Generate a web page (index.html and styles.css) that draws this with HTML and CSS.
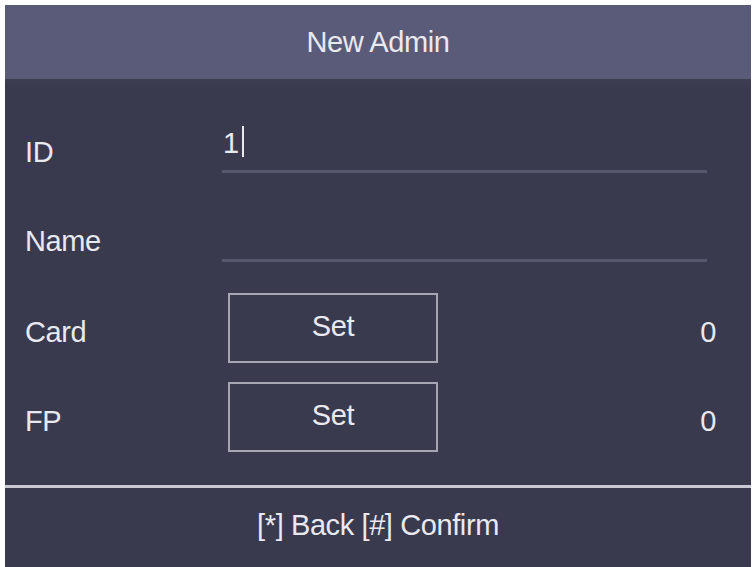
FILE: index.html
```html
<!DOCTYPE html>
<html>
<head>
<meta charset="utf-8">
<link rel="stylesheet" href="styles.css">
</head>
<body>
<div class="screen">
  <header class="title-bar">New Admin</header>
  <main class="form">
    <div class="row text-row first">
      <span class="label">ID</span>
      <div class="field"><span class="value">1</span><span class="caret"></span></div>
    </div>
    <div class="row text-row">
      <span class="label">Name</span>
      <div class="field"></div>
    </div>
    <div class="row btn-row card-row">
      <span class="label">Card</span>
      <div class="set-btn">Set</div>
      <span class="count">0</span>
    </div>
    <div class="row btn-row fp-row">
      <span class="label">FP</span>
      <div class="set-btn">Set</div>
      <span class="count">0</span>
    </div>
  </main>
  <div class="separator"></div>
  <footer class="hint-bar">[*] Back [#] Confirm</footer>
</div>
</body>
</html>
```

FILE: styles.css
```css
html, body {
  margin: 0;
  padding: 0;
  background: #ffffff;
}
body {
  width: 754px;
  height: 567px;
  overflow: hidden;
  font-family: "Liberation Sans", Arial, sans-serif;
  font-size: 29px;
  letter-spacing: -0.4px;
  color: #e9e9f0;
}
.screen {
  margin: 5px 3px 0 5px;
  height: 562px;
  display: flex;
  flex-direction: column;
  background: #3a3a4f;
}
.title-bar {
  height: 74px;
  flex: none;
  display: flex;
  align-items: center;
  justify-content: center;
  background: #5a5b79;
  line-height: 32px;
}
.form {
  flex: 1;
  display: flex;
  flex-direction: column;
  background: linear-gradient(#3e3e52 0, #3a3a4f 8px);
}
.row {
  display: grid;
  grid-template-columns: 197px 210px 1fr;
  padding-left: 20px;
  padding-right: 35px;
}
.label {
  line-height: 32px;
}
.text-row {
  grid-template-columns: 197px 485px;
  height: 89px;
  align-items: end;
}
.text-row.first {
  height: 94px;
}
.text-row .label {
  padding-bottom: 5px;
}
.field {
  height: 45px;
  box-sizing: border-box;
  border-bottom: 3px solid #56576d;
  display: flex;
  align-items: flex-start;
  line-height: 32px;
}
.value {
  display: block;
  padding-left: 1px;
  margin-top: -1px;
}
.caret {
  width: 2px;
  height: 31px;
  margin-left: 3px;
  margin-top: -2px;
  background: #e9e9f0;
}
.btn-row {
  height: 70px;
  align-items: center;
}
.card-row { margin-top: 31px; }
.fp-row { margin-top: 19px; }
.btn-row .label,
.count {
  padding-top: 7px;
}
.set-btn {
  box-sizing: border-box;
  margin-left: 6px;
  width: 210px;
  height: 70px;
  border: 2px solid #a5a5b4;
  display: flex;
  align-items: center;
  justify-content: center;
  padding-bottom: 4px;
  line-height: 32px;
}
.count {
  text-align: right;
  line-height: 32px;
}
.separator {
  height: 3px;
  flex: none;
  background: #c9c9d4;
}
.hint-bar {
  height: 79px;
  flex: none;
  display: flex;
  align-items: center;
  justify-content: center;
  padding-bottom: 6px;
  box-sizing: border-box;
  line-height: 32px;
}
```
